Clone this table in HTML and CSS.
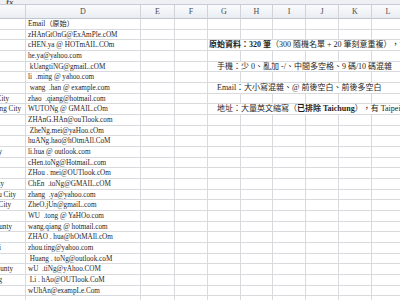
FILE: index.html
```html
<!DOCTYPE html>
<html lang="zh-Hant">
<head>
<meta charset="utf-8">
<title>Sheet</title>
<link rel="stylesheet" href="styles.css">
</head>
<body>
<div class="fbar"><span class="fx">fx</span></div>
<div class="sheet">
  <div class="h"></div><div class="h">D</div><div class="h">E</div><div class="h">F</div><div class="h">G</div><div class="h">H</div><div class="h">I</div><div class="h">J</div><div class="h">K</div><div class="h">L</div>

  <div class="c"></div><div class="d">Email（原始）</div><i></i><i></i><i></i><i></i><i></i><i></i><i></i><i></i>
  <div class="c"></div><div class="d">zHAnGtOnG@ExAmPle.cOM</div><i></i><i></i><i></i><i></i><i></i><i></i><i></i><i></i>
  <div class="c"></div><div class="d">cHEN.ya @ HOTmAIL.COm</div><i></i><i></i><div class="note"><b>原始資料：320 筆</b>（300 隨機名單 + 20 筆刻意重複），包含重複與髒資料</div>
  <div class="c"></div><div class="d">he.ya@yahoo.com</div><i></i><i></i><i></i><i></i><i></i><i></i><i></i><i></i>
  <div class="c"></div><div class="d"> kUangtiNG@gmaiL.cOM</div><i></i><i></i><div class="note in">手機：少 0、亂加 -/、中間多空格、9 碼/10 碼混雜</div>
  <div class="c"></div><div class="d">li  .ming @ yahoo.com</div><i></i><i></i><i></i><i></i><i></i><i></i><i></i><i></i>
  <div class="c"></div><div class="d"> wang  .han @ example.com</div><i></i><i></i><div class="note in">Email：大小寫混雜、@ 前後空白、前後多空白</div>
  <div class="c p16">Taichung City</div><div class="d">zhao  .qiang@hotmail.com</div><i></i><i></i><i></i><i></i><i></i><i></i><i></i><i></i>
  <div class="c p4">Taichung City</div><div class="d">WUTONg @ GMAIL.cOm</div><i></i><i></i><div class="note in">地址：大量英文縮寫（<b>已排除 Taichung</b>），有 Taipei/New Taipei 等</div>
  <div class="c"></div><div class="d">ZHAnG.HAn@ouTlook.com</div><i></i><i></i><i></i><i></i><i></i><i></i><i></i><i></i>
  <div class="c"></div><div class="d"> ZheNg.mei@yaHoo.cOm</div><i></i><i></i><i></i><i></i><i></i><i></i><i></i><i></i>
  <div class="c"></div><div class="d">huANg.hao@hOtmAIl.CoM</div><i></i><i></i><i></i><i></i><i></i><i></i><i></i><i></i>
  <div class="c p23">Taoyuan City</div><div class="d">li.hua @ outlook.com</div><i></i><i></i><i></i><i></i><i></i><i></i><i></i><i></i>
  <div class="c"></div><div class="d">cHen.toNg@HotmaiL.com</div><i></i><i></i><i></i><i></i><i></i><i></i><i></i><i></i>
  <div class="c"></div><div class="d">ZHou . mei@OUTlook.cOm</div><i></i><i></i><i></i><i></i><i></i><i></i><i></i><i></i>
  <div class="c p21">Tainan City</div><div class="d">ChEn  .toNg@GMAIL.cOM</div><i></i><i></i><i></i><i></i><i></i><i></i><i></i><i></i>
  <div class="c p9">Hsinchu City</div><div class="d">zhang  .ya@yahoo.com</div><i></i><i></i><i></i><i></i><i></i><i></i><i></i><i></i>
  <div class="c p14">Kaohsiung City</div><div class="d">ZheO.jUn@gmaiL.com</div><i></i><i></i><i></i><i></i><i></i><i></i><i></i><i></i>
  <div class="c"></div><div class="d">WU  .tong @ YaHOo.com</div><i></i><i></i><i></i><i></i><i></i><i></i><i></i><i></i>
  <div class="c p13">Yilan County</div><div class="d">wang.qiang @ hotmail.com</div><i></i><i></i><i></i><i></i><i></i><i></i><i></i><i></i>
  <div class="c"></div><div class="d">ZHAO . hua@hOtMAIl.cOm</div><i></i><i></i><i></i><i></i><i></i><i></i><i></i><i></i>
  <div class="c p24">Taipei</div><div class="d">zhou.ting@yahoo.com</div><i></i><i></i><i></i><i></i><i></i><i></i><i></i><i></i>
  <div class="c"></div><div class="d"> Huang . toNg@outlook.coM</div><i></i><i></i><i></i><i></i><i></i><i></i><i></i><i></i>
  <div class="c p12">Pingtung County</div><div class="d">wU  .tiNg@yAhoo.COM</div><i></i><i></i><i></i><i></i><i></i><i></i><i></i><i></i>
  <div class="c p23">Keelung</div><div class="d"> Li . hAo@OUTlook.CoM</div><i></i><i></i><i></i><i></i><i></i><i></i><i></i><i></i>
  <div class="c"></div><div class="d">wUhAn@exampLe.Com</div><i></i><i></i><i></i><i></i><i></i><i></i><i></i><i></i>
  <div class="c"></div><div class="d"></div><i></i><i></i><i></i><i></i><i></i><i></i><i></i><i></i>
</div>
</body>
</html>
```
FILE: styles.css
```css
* { box-sizing: border-box; margin: 0; padding: 0; }

html, body {
  width: 400px;
  height: 300px;
  overflow: hidden;
  background: #fff;
}

body {
  font-family: "Liberation Serif", "Noto Sans CJK TC", serif;
  font-size: 8px;
  color: #1e1e1e;
}

.fbar {
  height: 5px;
  background: #eef0f3;
  border-bottom: 1px solid #c6ccd5;
  display: flex;
  align-items: flex-end;
  overflow: hidden;
}

.fx {
  margin-left: 6px;
  font-style: italic;
  font-size: 9px;
  line-height: 4px;
  color: #555;
  font-weight: bold;
}

.sheet {
  display: grid;
  grid-template-columns: 26px 115px 34px 33px 33px 32px 33px 33px 33px 33px;
  grid-template-rows: 14px;
  grid-auto-rows: 10.68px;
}

.h {
  background: linear-gradient(#fafbfc, #e9edf2);
  border-right: 1px solid #cfd4db;
  border-bottom: 1px solid #bfc6cf;
  color: #4d4d4d;
  text-align: center;
  line-height: 13px;
  font-size: 8px;
}

.sheet > i,
.c,
.d,
.note {
  border-right: 1px solid #d8dadd;
  border-bottom: 1px solid #d8dadd;
  line-height: 10px;
  white-space: pre;
  overflow: hidden;
}

.c {
  display: flex;
  justify-content: flex-end;
  font-size: 7.2px;
}

.d {
  padding-left: 2px;
  font-size: 7.2px;
}

.note {
  grid-column: span 6;
  border-right: none;
  padding-left: 1px;
  background: #fff;
}

.note.in { padding-left: 9px; }

.note b { font-weight: bold; }

.p4 { padding-right: 4px; }
.p9 { padding-right: 9px; }
.p12 { padding-right: 12px; }
.p13 { padding-right: 13px; }
.p14 { padding-right: 14px; }
.p16 { padding-right: 16px; }
.p21 { padding-right: 21px; }
.p23 { padding-right: 23px; }
.p24 { padding-right: 24px; }
```
